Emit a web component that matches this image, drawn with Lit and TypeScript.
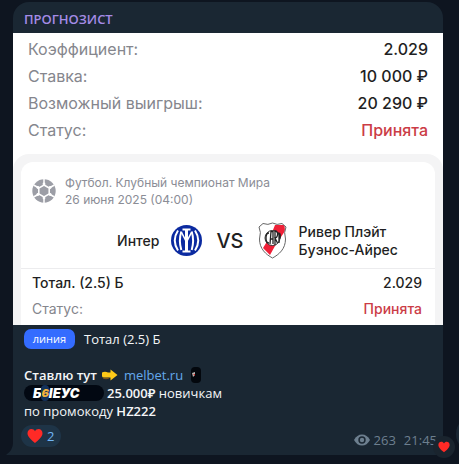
import { LitElement, html, css, svg } from "lit";
import { customElement } from "lit/decorators.js";

const heart = svg`<path d="M8 15C5 12.400 .5 9 .5 5.200C.5 2.700 2.300 1 4.400 1C6 1 7.300 1.900 8 3.300C8.700 1.900 10 1 11.600 1C13.700 1 15.500 2.700 15.500 5.200C15.500 9 11 12.400 8 15Z" fill="#ff2a26"/>`;

@customElement("bet-slip")
class BetSlip extends LitElement {
  static styles = css`
    :host { display: block; background: #fff; color: #1f1f23; font-family: Inter, "Liberation Sans", sans-serif; }
    dl, dd, dt, p { margin: 0; }
    .row { display: flex; justify-content: space-between; }
    .row dt { color: #85868d; }
    .row dd { font-weight: 500; }
    .row .accepted { color: #cb3c46; }
    .summary { display: grid; row-gap: 1px; padding: 3px 15px 11px; font-size: 16px; line-height: 26px; }
    .panel { background: #f4f4f5; border-radius: 16px 16px 0 0; padding: 8px 8px 0; }
    .card { background: #fff; border-radius: 12px 12px 0 0; padding-top: 12px; }
    .event { display: flex; align-items: center; gap: 9px; padding: 0 11px; color: #8b8d96; font-size: 12px; line-height: 17px; }
    .teams { display: grid; grid-template-columns: 1fr auto 1fr; align-items: center; gap: 14px; padding: 14px 9px 9px 13px; font-size: 14px; font-weight: 500; line-height: 18px; }
    .team { display: flex; align-items: center; gap: 12px; }
    .home { justify-content: flex-end; }
    .vs { font-size: 20px; line-height: 24px; }
    svg { display: block; flex: none; }
    .total { border-top: 1px solid #ececee; padding: 1px 13px 3px 11px; font-size: 14px; line-height: 26px; }
    .total .pick { color: #1f1f23; font-weight: 500; }
  `;

  render() {
    return html`
      <dl class="summary">
        <div class="row"><dt>Коэффициент:</dt><dd>2.029</dd></div>
        <div class="row"><dt>Ставка:</dt><dd>10 000 ₽</dd></div>
        <div class="row"><dt>Возможный выигрыш:</dt><dd>20 290 ₽</dd></div>
        <div class="row"><dt>Статус:</dt><dd class="accepted">Принята</dd></div>
      </dl>
      <div class="panel">
        <div class="card">
          <div class="event">
            <svg width="24" height="24" viewBox="0 0 24 24" aria-hidden="true">
              <circle cx="12" cy="12" r="11.700" fill="#9c9ea6"/>
              <path d="M12 6L17.200 9V15L12 18L6.800 15V9Z" fill="none" stroke="#fff" stroke-width="1.500"/>
              <path d="M12 6V0M17.200 9L22.400 6M17.200 15L22.400 18M12 18V24M6.800 15L1.600 18M6.800 9L1.600 6" fill="none" stroke="#fff" stroke-width="1.500"/>
              <g fill="#fff"><circle cx="12" cy="5" r="1.400"/><circle cx="18.100" cy="8.500" r="1.400"/><circle cx="18.100" cy="15.500" r="1.400"/><circle cx="12" cy="19" r="1.400"/><circle cx="5.900" cy="15.500" r="1.400"/><circle cx="5.900" cy="8.500" r="1.400"/></g>
            </svg>
            <div>
              <p>Футбол. Клубный чемпионат Мира</p>
              <p>26 июня 2025 (04:00)</p>
            </div>
          </div>
          <div class="teams">
            <div class="team home">
              <span>Интер</span>
              <svg width="31" height="31" viewBox="0 0 31 31" aria-hidden="true">
                <circle cx="15.500" cy="15.500" r="15.500" fill="#0b2aa0"/>
                <g fill="none" stroke="#fff" stroke-width="2">
                  <path d="M7 5.500Q.5 15.500 7 25.500M24 5.500Q30.500 15.500 24 25.500"/>
                  <path d="M10.300 6.500Q7.500 15.500 10.300 25M20.700 6.500Q23.500 15.500 20.700 25"/>
                  <path d="M10.300 7L15.500 17L20.700 7" stroke-width="1.600"/>
                </g>
                <path d="M11.500 3.500H19.500V5.500H17V25.500H19.500V27.500H11.500V25.500H14V5.500H11.500Z" fill="#fff"/>
              </svg>
            </div>
            <span class="vs">VS</span>
            <div class="team">
              <svg width="29" height="37" viewBox="0 0 29 37" aria-hidden="true">
                <defs><clipPath id="shield"><path d="M5 1.500Q10 3.500 14.500 1Q19 3.500 24 1.500L28 5Q25.500 10 27.500 17C27.500 27 21 32.500 14.500 36C8 32.500 1.500 27 1.500 17Q3.500 10 1 5Z"/></clipPath></defs>
                <g clip-path="url(#shield)">
                  <rect width="29" height="37" fill="#fff"/>
                  <path d="M17 3H26.500L27 9L17 24L12 33L5 26L13 13Z" fill="#ee2037"/>
                </g>
                <path d="M5 1.500Q10 3.500 14.500 1Q19 3.500 24 1.500L28 5Q25.500 10 27.500 17C27.500 27 21 32.500 14.500 36C8 32.500 1.500 27 1.500 17Q3.500 10 1 5Z" fill="none" stroke="#666" stroke-width="1"/>
                <circle cx="14.500" cy="16" r="7.500" fill="#fff" stroke="#333" stroke-width="1"/>
                <path d="M11 11Q8 11 8 16T11 21M12 22L13 9.500H15V22M12 17H15M17 23V9Q20 9 19.500 13Q19 16 17 16L19.500 21M21 21V11Q23 12 22 16H21" fill="none" stroke="#222" stroke-width="1.300"/>
              </svg>
              <span>Ривер Плэйт<br>Буэнос-Айрес</span>
            </div>
          </div>
          <dl class="total">
            <div class="row"><dt class="pick">Тотал. (2.5) Б</dt><dd>2.029</dd></div>
            <div class="row"><dt>Статус:</dt><dd class="accepted">Принята</dd></div>
          </dl>
        </div>
      </div>
    `;
  }
}

@customElement("app-root")
class AppRoot extends LitElement {
  static styles = css`
    :host { display: block; box-sizing: border-box; min-height: 100vh; position: relative; overflow: hidden; padding: 2px 16px 9px 13px; background: #0e1520; color: #f4f6f8; font: 13px/18px "Open Sans", "Noto Sans", sans-serif; }
    .bubble { position: relative; background: #1a2733; border-radius: 16px 16px 0 0; }
    .tail { position: absolute; left: -7px; bottom: 0; display: block; }
    h1 { margin: 0; padding: 8px 11px 5px; color: #a58be6; font-size: 13px; line-height: 18px; font-weight: 600; }
    .body { padding: 4px 6px 6px 11px; }
    p { margin: 0; }
    .pick { display: flex; align-items: center; gap: 9px; height: 20px; margin-bottom: 17px; }
    .tag { background: #346cff; color: #fff; border-radius: 7px; font-size: 11px; line-height: 20px; width: 51px; text-align: center; }
    .line { display: flex; align-items: center; height: 18px; gap: 4px; }
    b { font-weight: 600; }
    a { color: #64a9ec; text-decoration: none; }
    .promo { gap: 3px; }
    .site { margin: 0 4px 0 2px; }
    svg { display: block; flex: none; }
    .bonus { display: flex; align-items: center; box-sizing: border-box; width: 80px; height: 16px; padding-left: 9px; border-radius: 8px; background: #020812; color: #fff; font: italic 900 13px/16px Inter, sans-serif; }
    .bonus i { color: #f3b33b; background: #14325a; border-radius: 4px; font-size: 11px; }
    .foot { display: flex; align-items: flex-start; justify-content: space-between; margin: 5px 0 0 -3px; }
    button { border: 0; font: inherit; cursor: pointer; }
    .reaction { display: flex; align-items: center; gap: 4px; height: 22px; padding: 0 7px 0 6px; border-radius: 11px; background: #1e3447; color: #70b5f5; }
    .meta { display: flex; align-items: center; gap: 4px; margin-top: 6px; color: #6d7f8f; }
    .meta time { margin-left: 4px; }
    .quick { position: absolute; right: -12px; bottom: -3px; width: 22px; height: 22px; border-radius: 11px; padding: 0; background: #1a242e; display: grid; place-items: center; }
    .share { position: absolute; bottom: 3px; width: 36px; height: 36px; border-radius: 18px; right: -49px; background: #1a2733; }
  `;

  render() {
    return html`
      <article class="bubble">
        <svg class="tail" width="8" height="16" viewBox="0 0 8 16" aria-hidden="true"><path d="M8 0H7V4Q7 11 0 16H8Z" fill="#1a2733"/></svg>
        <h1>ПРОГНОЗИСТ</h1>
        <bet-slip></bet-slip>
        <div class="body">
          <p class="pick"><span class="tag">линия</span><span>Тотал (2.5) Б</span></p>
          <p class="line">
            <b>Ставлю тут</b>
            <svg width="17" height="12" viewBox="0 0 17 12" aria-hidden="true"><path d="M1 3.500Q4 2 7 3.500H9.500V.5L16.500 6L9.500 11.500V8.500H4Q1 9 1 7Z" fill="#fdc918"/><path d="M2 9Q5 10.500 8 9" fill="none" stroke="#8a5b14"/></svg>
            <a class="site" href="#melbet">melbet.ru</a>
            <svg width="10" height="16" viewBox="0 0 10 16" aria-hidden="true"><rect width="10" height="16" rx="4" fill="#03070d"/><path d="M1 6L4 5V8L2 10Z" fill="#b8b5b2"/><path d="M2 7H4V9Z" fill="#c33"/></svg>
          </p>
          <p class="line promo"><span class="bonus">Б<i>6</i>IEУС</span><span><b>25.000₽</b> новичкам</span></p>
          <p class="line"><span>по промокоду <b>HZ222</b></span></p>
          <div class="foot">
            <button class="reaction" aria-label="Heart, 2"><svg width="16" height="16" viewBox="0 0 16 16" aria-hidden="true">${heart}</svg>2</button>
            <div class="meta">
              <svg width="16" height="12" viewBox="0 0 16 12" aria-hidden="true"><path d="M0 6Q3 .5 8 .5T16 6Q13 11.500 8 11.500T0 6Z" fill="#6d7f8f"/><circle cx="8" cy="6" r="3.700" fill="#1a2733"/><circle cx="8" cy="6" r="2.200" fill="#6d7f8f"/></svg>
              <span>263</span><time>21:45</time>
            </div>
          </div>
        </div>
        <button class="share" aria-label="Share"></button>
        <button class="quick" aria-label="React"><svg width="12" height="12" viewBox="0 0 16 16" aria-hidden="true">${heart}</svg></button>
      </article>
    `;
  }
}
